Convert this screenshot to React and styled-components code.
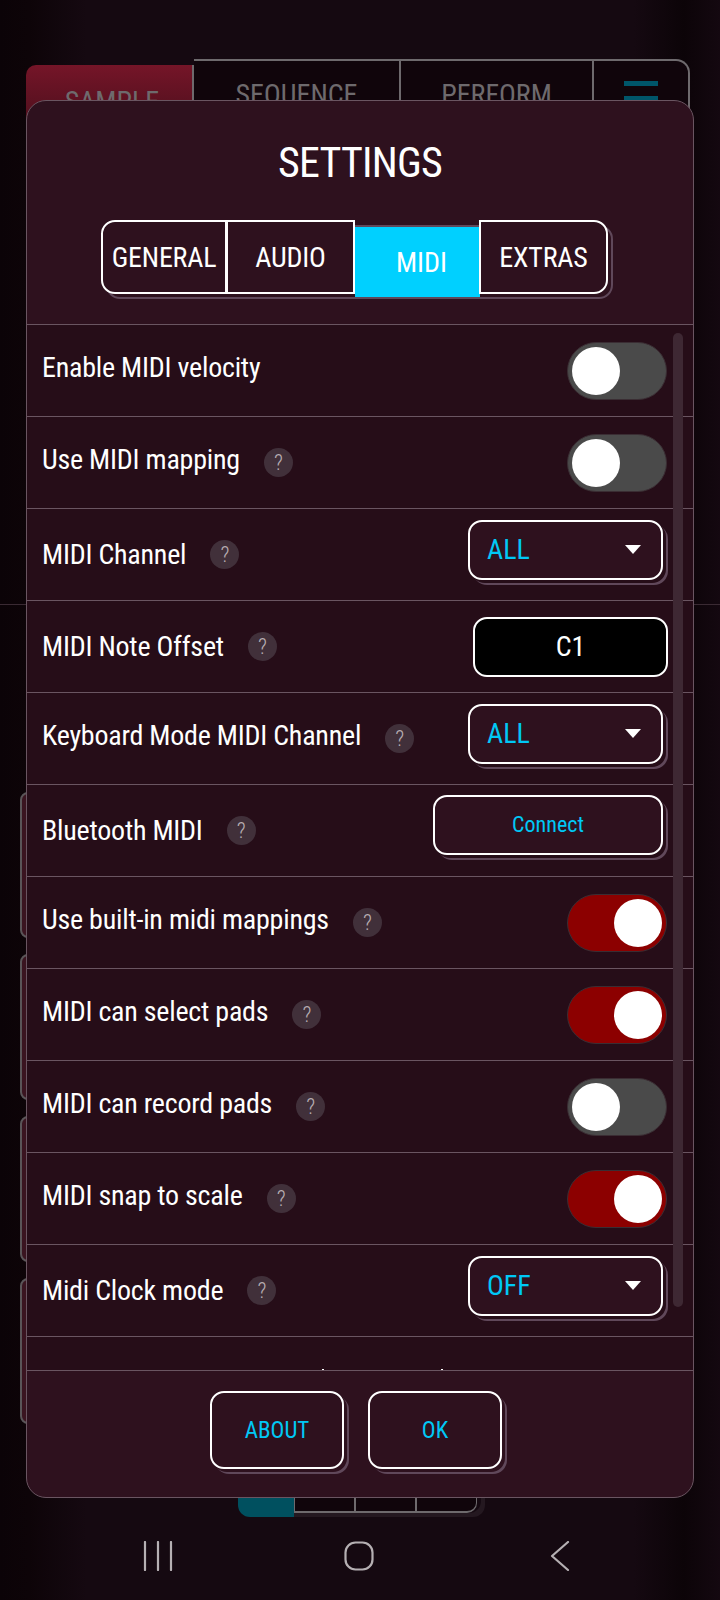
import React from 'react'
import styled, {createGlobalStyle, css} from 'styled-components'

const GlobalStyle = createGlobalStyle`
  html, body {
    margin: 0;
    padding: 0;
    background: #130810;
  }
  body {
    font-family: "Roboto Condensed", "Roboto", sans-serif;
    font-stretch: condensed;
    color: #fff;
  }
`

const line = '#6a5561'
const dropLine = '#60485a'
const cyan = '#00c8f5'
const backLine = '#6e6a6d'

// offset outline under the framed controls
const offsetFrame = (gap) => css`
  box-shadow: 3px 3px 0 ${gap}, 5px 5px 0 ${dropLine};
`

const Screen = styled.div`
  position: relative;
  width: 720px;
  height: 1600px;
  overflow: hidden;
  background: linear-gradient(90deg, #0b0307 0, #0d0408 4%, #150911 12%, #150911 88%, #0c0408 95%, #140810 100%);
`

const Backdrop = styled.div`
  display: flex;
  flex-direction: column;
  padding-top: 59px;
`

const BackTabs = styled.div`
  display: flex;
  align-items: flex-start;
  margin-left: 26px;
  width: 664px;
  height: 70px;
  color: ${backLine};
  font-size: 28px;
  line-height: 28px;
`

const BackTab = styled.div`
  width: ${p => p.$w}px;
  height: 70px;
  box-sizing: border-box;
  display: flex;
  justify-content: center;
  padding-top: 20px;
  border: 2px solid ${backLine};
  border-left-width: 0;
  background: #10050b;
  &:last-child { border-radius: 0 14px 0 0; }
`

const SampleTab = styled.div`
  width: 168px;
  height: 64px;
  margin-top: 6px;
  display: flex;
  justify-content: center;
  padding: 23px 0 0 6px;
  box-sizing: border-box;
  border-radius: 10px 0 0 0;
  border-right: 2px solid ${backLine};
  background: linear-gradient(#751528, #4a0f1c);
`

const MenuBars = styled.span`
  width: 34px;
  height: 20px;
  box-sizing: border-box;
  border-top: 5px solid #00566a;
  border-bottom: 5px solid #00566a;
`

const BackRule = styled.div`
  height: 1px;
  margin-top: 475px;
  background: #3a2a33;
`

const PadColumn = styled.div`
  display: flex;
  flex-direction: column;
  gap: 16px;
  margin: 187px 0 0 20px;
`

const PadStrip = styled.div`
  width: 30px;
  height: 146px;
  box-sizing: border-box;
  border: 2px solid #5a5558;
  border-radius: 8px;
  background: #3a1420;
`

const Segments = styled.div`
  display: flex;
  align-items: flex-start;
  width: 243px;
  height: 38px;
  margin: 51px 0 0 238px;
  box-shadow: 4px 4px 0 #241820;
  border-radius: 0 0 12px 12px;
`

const Segment = styled.div`
  width: 61px;
  height: 38px;
  box-sizing: border-box;
  border: 2px solid ${backLine};
  border-left-width: 1px;
  border-right-width: 1px;
  background: #10050b;
  &:last-child { border-radius: 0 0 10px 0; }
`

const ActiveSegment = styled.div`
  width: 56px;
  height: 42px;
  background: #00505f;
  border-radius: 0 0 0 12px;
`

const NavBar = styled.nav`
  display: grid;
  grid-template-columns: repeat(3, 201px);
  justify-items: center;
  margin: 28px 0 0 57px;
`

const NavIcon = styled.svg`
  width: 32px;
  height: 30px;
  fill: none;
  stroke: #b5b0b3;
  stroke-width: 2.2;
  stroke-linecap: round;
  stroke-linejoin: round;
`

const Dialog = styled.div`
  position: absolute;
  left: 26px;
  top: 100px;
  width: 668px;
  height: 1398px;
  box-sizing: border-box;
  background: #2e111e;
  border: 1px solid ${line};
  border-radius: 20px;
  display: flex;
  flex-direction: column;
  overflow: hidden;
`

const Header = styled.header`
  height: 223px;
  display: flex;
  flex-direction: column;
  align-items: center;
  border-bottom: 1px solid ${line};
`

const Title = styled.h1`
  margin: 37px 0 0;
  font-size: 42px;
  font-weight: 400;
  letter-spacing: -0.8px;
`

const Tabs = styled.div`
  position: relative;
  z-index: 0;
  display: flex;
  margin: 33px 11px 0 0;
  height: 74px;
  &::after {
    content: '';
    position: absolute;
    z-index: -1;
    inset: 5px -5px -5px 5px;
    border: 2px solid ${dropLine};
    border-radius: 14px;
  }
`

const Tab = styled.div`
  width: ${p => p.$w}px;
  box-sizing: border-box;
  display: flex;
  align-items: center;
  justify-content: center;
  font-size: 28px;
  letter-spacing: -0.2px;
  border: 2px solid #fff;
  margin-left: -1px;
  background: #2e111e;
  &:first-child { border-radius: 14px 0 0 14px; margin-left: 0; }
  &:last-child { border-radius: 0 14px 14px 0; }
`

const ActiveTab = styled.div`
  width: 125px;
  height: 70px;
  box-sizing: border-box;
  margin: 7px 0 0 0;
  padding-left: 8px;
  display: flex;
  align-items: center;
  justify-content: center;
  font-size: 28px;
  background: #00d0ff;
`

const List = styled.div`
  position: relative;
  flex: 1;
  min-height: 0;
  background: #260d18;
  overflow: hidden;
`

const Scrollbar = styled.div`
  position: absolute;
  top: 8px;
  left: 646px;
  width: 10px;
  height: 974px;
  border-radius: 5px;
  background: #3e2833;
`

const Speck = styled.span`
  position: absolute;
  bottom: 0;
  left: ${p => p.$x}px;
  width: 2px;
  height: 1px;
  background: #fff;
`

const Row = styled.div`
  height: 92px;
  box-sizing: border-box;
  border-bottom: 1px solid ${line};
  display: flex;
  align-items: center;
  justify-content: space-between;
  padding: 0 26px 0 15px;
`

const Label = styled.div`
  display: flex;
  align-items: center;
  gap: 24px;
  font-size: 28px;
  letter-spacing: -0.23px;
`

const LabelText = styled.span`
  padding-bottom: ${p => p.$up ? 6 : 0}px;
`

const Help = styled.span`
  width: 29px;
  height: 29px;
  border-radius: 50%;
  background: #41303a;
  color: #b8aeb3;
  font-size: 22px;
  font-weight: 300;
  display: flex;
  align-items: center;
  justify-content: center;
`

const Toggle = styled.div`
  width: 100px;
  height: 58px;
  box-sizing: border-box;
  border-radius: 29px;
  border: 1px solid #3a2d33;
  background: ${p => p.$on ? '#8c0000' : '#4a4a4a'};
  display: flex;
  align-items: center;
  justify-content: ${p => p.$on ? 'flex-end' : 'flex-start'};
  padding: 0 4px;
`

const Knob = styled.span`
  width: 48px;
  height: 48px;
  border-radius: 50%;
  background: #fff;
`

const Select = styled.div`
  width: 195px;
  height: 60px;
  box-sizing: border-box;
  border: 2px solid #fff;
  border-radius: 14px;
  background: #2e111e;
  ${offsetFrame('#260d18')}
  color: ${cyan};
  font-size: 28px;
  display: flex;
  align-items: center;
  justify-content: space-between;
  padding: 0 20px 0 17px;
  margin: 0 4px 10px 0;
`

const Caret = styled.span`
  border-left: 8px solid transparent;
  border-right: 8px solid transparent;
  border-top: 9px solid #fff;
`

const NoteInput = styled.div`
  width: 195px;
  height: 60px;
  box-sizing: border-box;
  border: 2px solid #fff;
  border-radius: 14px;
  background: #000;
  font-size: 28px;
  display: flex;
  align-items: center;
  justify-content: center;
  margin-right: -1px;
`

const ConnectButton = styled.div`
  width: 230px;
  height: 60px;
  box-sizing: border-box;
  border: 2px solid #fff;
  border-radius: 14px;
  background: #2e111e;
  ${offsetFrame('#260d18')}
  color: ${cyan};
  font-size: 22px;
  display: flex;
  align-items: center;
  justify-content: center;
  margin: 0 4px 12px 0;
`

const Footer = styled.footer`
  height: 127px;
  border-top: 1px solid ${line};
  display: flex;
  justify-content: center;
  gap: 24px;
  padding: 20px 8px 0 0;
  box-sizing: border-box;
`

const FooterButton = styled.div`
  width: 134px;
  height: 78px;
  box-sizing: border-box;
  border: 2px solid #fff;
  border-radius: 14px;
  ${offsetFrame('#2e111e')}
  color: ${cyan};
  font-size: 23px;
  display: flex;
  align-items: center;
  justify-content: center;
`

const rows = [
  {label: 'Enable MIDI velocity', kind: 'toggle', on: false, noHelp: true, up: true},
  {label: 'Use MIDI mapping', kind: 'toggle', on: false, up: true},
  {label: 'MIDI Channel', kind: 'select', value: 'ALL'},
  {label: 'MIDI Note Offset', kind: 'note', value: 'C1'},
  {label: 'Keyboard Mode MIDI Channel', kind: 'select', value: 'ALL', up: true},
  {label: 'Bluetooth MIDI', kind: 'connect'},
  {label: 'Use built-in midi mappings', kind: 'toggle', on: true, up: true},
  {label: 'MIDI can select pads', kind: 'toggle', on: true, up: true},
  {label: 'MIDI can record pads', kind: 'toggle', on: false, up: true},
  {label: 'MIDI snap to scale', kind: 'toggle', on: true, up: true},
  {label: 'Midi Clock mode', kind: 'select', value: 'OFF'},
]

function Control({row}) {
  if (row.kind === 'toggle') return <Toggle $on={row.on}><Knob /></Toggle>
  if (row.kind === 'select') return <Select>{row.value}<Caret /></Select>
  if (row.kind === 'note') return <NoteInput>{row.value}</NoteInput>
  return <ConnectButton>Connect</ConnectButton>
}

export default function App() {
  return (
    <Screen>
      <GlobalStyle />
      <Backdrop>
        <BackTabs>
          <SampleTab>SAMPLE</SampleTab>
          <BackTab $w={207}>SEQUENCE</BackTab>
          <BackTab $w={193}>PERFORM</BackTab>
          <BackTab $w={96}><MenuBars /></BackTab>
        </BackTabs>
        <BackRule />
        <PadColumn>
          <PadStrip />
          <PadStrip />
          <PadStrip />
          <PadStrip />
        </PadColumn>
        <Segments>
          <ActiveSegment />
          <Segment />
          <Segment />
          <Segment />
        </Segments>
        <NavBar>
          <NavIcon viewBox="0 0 32 30"><path d="M3 1v28M16 1v28M29 1v28" /></NavIcon>
          <NavIcon viewBox="0 0 32 30"><rect x="2.5" y="1.5" width="27" height="27" rx="10" /></NavIcon>
          <NavIcon viewBox="0 0 32 30"><path d="M24 1L8 15l16 14" /></NavIcon>
        </NavBar>
      </Backdrop>
      <Dialog>
        <Header>
          <Title>SETTINGS</Title>
          <Tabs>
            <Tab $w={126}>GENERAL</Tab>
            <Tab $w={129}>AUDIO</Tab>
            <ActiveTab>MIDI</ActiveTab>
            <Tab $w={129}>EXTRAS</Tab>
          </Tabs>
        </Header>
        <List>
          {rows.map(row => (
            <Row key={row.label}>
              <Label>
                <LabelText $up={row.up}>{row.label}</LabelText>
                {!row.noHelp && <Help>?</Help>}
              </Label>
              <Control row={row} />
            </Row>
          ))}
          <Scrollbar />
          <Speck $x={295} />
          <Speck $x={414} />
        </List>
        <Footer>
          <FooterButton>ABOUT</FooterButton>
          <FooterButton>OK</FooterButton>
        </Footer>
      </Dialog>
    </Screen>
  )
}
